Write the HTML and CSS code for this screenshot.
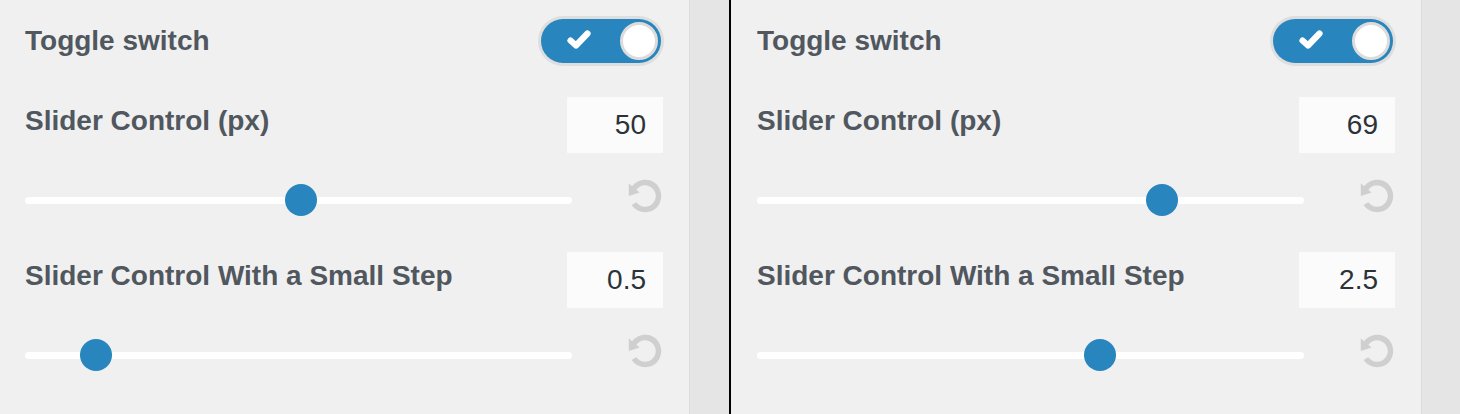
FILE: index.html
```html
<!DOCTYPE html>
<html lang="en">
<head>
<meta charset="utf-8">
<title>Controls</title>
<link rel="stylesheet" href="styles.css">
</head>
<body>
<div class="page">
  <section class="panel panel--first">
    <div class="toggle-row">
      <span class="label">Toggle switch</span>
      <span class="toggle">
        <svg class="check" width="26" height="22" viewBox="0 0 26 22"><polyline points="4.5,11.5 10,16.5 21.5,4.5" fill="none" stroke="#fff" stroke-width="6.2" stroke-linecap="round" stroke-linejoin="round"/></svg>
        <span class="knob"></span>
      </span>
    </div>
    <div class="group">
      <div class="group-head">
        <span class="label label--slider">Slider Control (px)</span>
        <input class="num" type="text" value="50">
      </div>
      <div class="slider-row">
        <div class="track"><span class="thumb" style="left:50.5%"></span></div>
        <svg class="reset" width="36" height="36" viewBox="0 0 20 20"><path fill="#cfcfcf" d="M10.25 1.020c5.1 0 8.75 4.04 8.75 9s-3.65 9-8.75 9c-3.2 0-6.02-1.59-7.68-3.99l2.59-1.52c1.1 1.5 2.86 2.51 4.84 2.51 3.3 0 6-2.790 6-6s-2.7-6-6-6c-1.97 0-3.72 1-4.82 2.49L7 8.020l-6 2v-7L2.89 4.6c1.67-2.2 4.33-3.58 7.36-3.58z"/></svg>
      </div>
    </div>
    <div class="group group--next">
      <div class="group-head">
        <span class="label label--slider">Slider Control With a Small Step</span>
        <input class="num" type="text" value="0.5">
      </div>
      <div class="slider-row">
        <div class="track"><span class="thumb" style="left:13%"></span></div>
        <svg class="reset" width="36" height="36" viewBox="0 0 20 20"><path fill="#cfcfcf" d="M10.25 1.020c5.1 0 8.75 4.04 8.75 9s-3.65 9-8.75 9c-3.2 0-6.02-1.59-7.68-3.99l2.59-1.52c1.1 1.5 2.86 2.51 4.84 2.51 3.3 0 6-2.790 6-6s-2.7-6-6-6c-1.97 0-3.72 1-4.82 2.49L7 8.020l-6 2v-7L2.89 4.6c1.67-2.2 4.33-3.58 7.36-3.58z"/></svg>
      </div>
    </div>
  </section>
  <div class="gutter"></div>
  <div class="divider"></div>
  <section class="panel">
    <div class="toggle-row">
      <span class="label">Toggle switch</span>
      <span class="toggle">
        <svg class="check" width="26" height="22" viewBox="0 0 26 22"><polyline points="4.5,11.5 10,16.5 21.5,4.5" fill="none" stroke="#fff" stroke-width="6.2" stroke-linecap="round" stroke-linejoin="round"/></svg>
        <span class="knob"></span>
      </span>
    </div>
    <div class="group">
      <div class="group-head">
        <span class="label label--slider">Slider Control (px)</span>
        <input class="num" type="text" value="69">
      </div>
      <div class="slider-row">
        <div class="track"><span class="thumb" style="left:74.1%"></span></div>
        <svg class="reset" width="36" height="36" viewBox="0 0 20 20"><path fill="#cfcfcf" d="M10.25 1.020c5.1 0 8.75 4.04 8.75 9s-3.65 9-8.75 9c-3.2 0-6.02-1.59-7.68-3.99l2.59-1.52c1.1 1.5 2.86 2.51 4.84 2.51 3.3 0 6-2.790 6-6s-2.7-6-6-6c-1.97 0-3.72 1-4.82 2.49L7 8.020l-6 2v-7L2.89 4.6c1.67-2.2 4.33-3.58 7.36-3.58z"/></svg>
      </div>
    </div>
    <div class="group group--next">
      <div class="group-head">
        <span class="label label--slider">Slider Control With a Small Step</span>
        <input class="num" type="text" value="2.5">
      </div>
      <div class="slider-row">
        <div class="track"><span class="thumb" style="left:62.7%"></span></div>
        <svg class="reset" width="36" height="36" viewBox="0 0 20 20"><path fill="#cfcfcf" d="M10.25 1.020c5.1 0 8.75 4.04 8.75 9s-3.65 9-8.75 9c-3.2 0-6.02-1.59-7.68-3.99l2.59-1.52c1.1 1.5 2.86 2.51 4.84 2.51 3.3 0 6-2.790 6-6s-2.7-6-6-6c-1.97 0-3.72 1-4.82 2.49L7 8.020l-6 2v-7L2.89 4.6c1.67-2.2 4.33-3.58 7.36-3.58z"/></svg>
      </div>
    </div>
  </section>
  <div class="gutter gutter--end"></div>
</div>
</body>
</html>
```
FILE: styles.css
```css
* { box-sizing: border-box; }
html, body { margin: 0; padding: 0; }
body {
  font-family: "Liberation Sans", Arial, sans-serif;
  background: #e5e5e5;
}
.page {
  display: flex;
  min-height: 414px;
  height: 414px;
  overflow: hidden;
}
.panel {
  flex: none;
  width: 691px;
  background: #f0f0f0;
  border-right: 1px solid #dcdcdc;
  padding: 16px 26px 0 26px;
}
.panel--first {
  width: 690px;
  padding-left: 25px;
}
.gutter {
  flex: none;
  width: 39px;
  background: #e5e5e5;
}
.gutter--end { flex: 1; }
.divider {
  flex: none;
  width: 2px;
  background: #000;
}
.label {
  font-size: 28px;
  line-height: 32px;
  font-weight: 700;
  color: #50575e;
}
.toggle-row {
  display: flex;
  align-items: center;
  justify-content: space-between;
  height: 50px;
}
.toggle {
  position: relative;
  display: flex;
  align-items: center;
  width: 120px;
  height: 44px;
  margin-right: 2px;
  border-radius: 22px;
  background: #2885be;
  box-shadow: 0 0 0 3px #dedede;
}
.check {
  margin-left: 25px;
  margin-top: -3px;
}
.knob {
  position: absolute;
  top: 3px;
  right: 3px;
  width: 38px;
  height: 38px;
  border-radius: 50%;
  background: #fff;
  border: 3px solid #dcdcdc;
}
.group { margin-top: 31px; }
.group--next { margin-top: 32px; }
.group-head {
  display: flex;
  align-items: flex-start;
  justify-content: space-between;
}
.label--slider { padding-top: 8px; }
.num {
  width: 96px;
  height: 56px;
  border: 0;
  outline: 0;
  background: #fbfbfc;
  font-family: "Liberation Sans", Arial, sans-serif;
  font-size: 28px;
  color: #2c3338;
  text-align: right;
  padding: 0 17px 0 0;
  margin: 0;
}
.slider-row {
  display: flex;
  align-items: center;
  justify-content: space-between;
  height: 40px;
  margin-top: 27px;
}
.track {
  position: relative;
  width: 547px;
  height: 7px;
  border-radius: 4px;
  background: #fff;
}
.thumb {
  position: absolute;
  top: 50%;
  width: 32px;
  height: 32px;
  border-radius: 50%;
  background: #2885be;
  transform: translate(-50%, -50%);
}
.reset {
  display: block;
  margin-bottom: 8px;
}
```
